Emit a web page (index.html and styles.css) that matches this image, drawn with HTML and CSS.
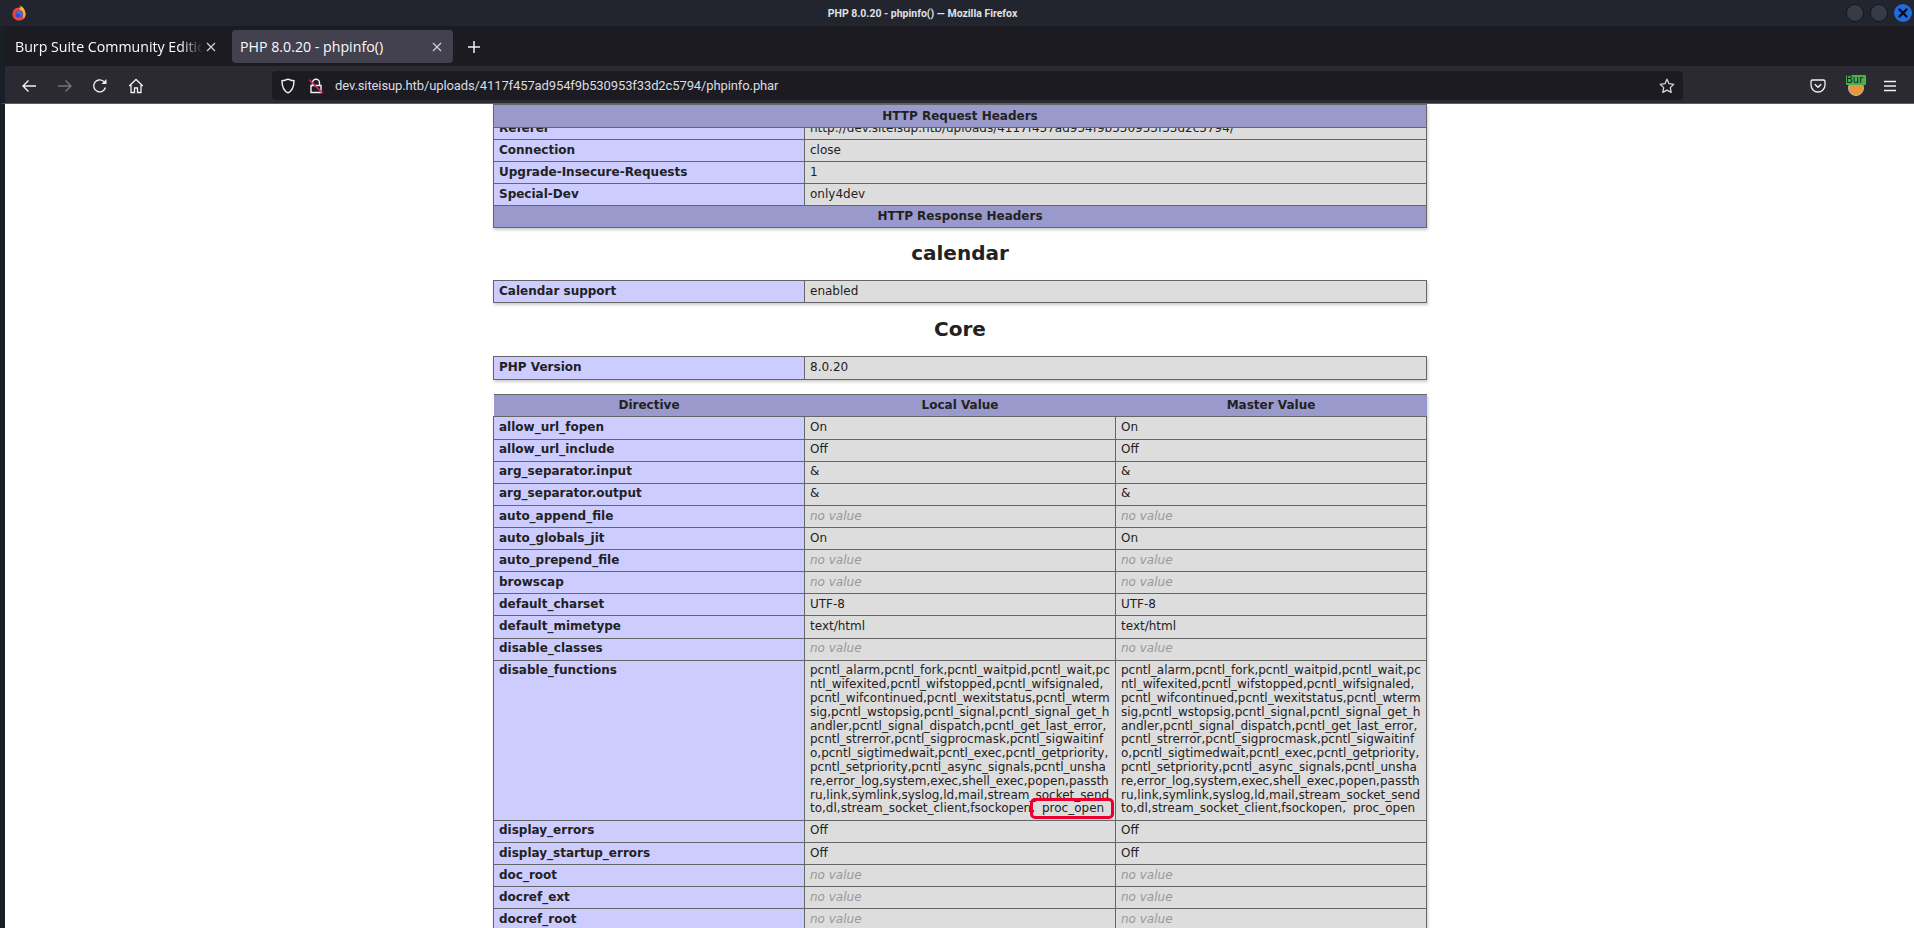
FILE: index.html
```html
<!DOCTYPE html>
<html lang="en">
<head>
<meta charset="utf-8">
<title>PHP 8.0.20 - phpinfo() — Mozilla Firefox</title>
<link rel="stylesheet" href="styles.css">
</head>
<body>
<div class="window">
  <header class="titlebar">
    <svg class="fx-logo" viewBox="0 0 16 16" width="16" height="16">
      <circle cx="8" cy="9" r="6.600" fill="#e8473f"/>
      <path d="M8 2.400c4 .4 6.600 3.200 6.600 6.600 0 2-.9 3.700-2.200 4.900-.2-3.400-2-6.500-4.400-11.500z" fill="#ffa436"/>
      <path d="M8.600 .6c1.200 1.300 1.300 2.400 1 3.400 1.800.6 3.500 2 4.400 3.900.3-3-1.700-6-5.400-7.300z" fill="#ffb52e"/>
      <circle cx="8.200" cy="9.300" r="3.700" fill="#4a3fc4"/>
      <path d="M5 8c1-1.800 3-2 4.500-1.200 1.600.9 2 3.200 1 4.700-1 1.300-3 1.700-4.500.7 1.500.3 3-.2 3.400-1.500.3-1.200-.5-2.200-1.800-2.200-.9 0-1.800.2-2.600-.5z" fill="#2f86ea"/>
    </svg>
    <div class="window-title">PHP 8.0.20 - phpinfo() — Mozilla Firefox</div>
    <div class="window-buttons">
      <span class="wbtn"></span>
      <span class="wbtn"></span>
      <span class="wbtn wbtn-close">
        <svg viewBox="0 0 18 18" width="18" height="18"><path d="M5.500 5.500l7 7M12.500 5.500l-7 7" stroke="#0b0d14" stroke-width="2.400" stroke-linecap="round"/></svg>
      </span>
    </div>
  </header>

  <nav class="tabstrip">
    <div class="tab">
      <span class="tab-label tab-label-fade">Burp Suite Community Edition</span>
      <svg class="tab-close" viewBox="0 0 10 10" width="10" height="10"><path d="M1 1l8 8M9 1l-8 8" stroke="#d4d4d8" stroke-width="1.200"/></svg>
    </div>
    <div class="tab tab-active">
      <span class="tab-label">PHP 8.0.20 - phpinfo()</span>
      <svg class="tab-close" viewBox="0 0 10 10" width="10" height="10"><path d="M1 1l8 8M9 1l-8 8" stroke="#d4d4d8" stroke-width="1.200"/></svg>
    </div>
    <svg class="new-tab" viewBox="0 0 14 14" width="14" height="14"><path d="M7 1v12M1 7h12" stroke="#f0f0f4" stroke-width="1.500"/></svg>
  </nav>

  <div class="toolbar">
    <div class="nav-buttons">
      <svg viewBox="0 0 16 16" width="16" height="16"><path d="M15 8H2M7.500 2.500L2 8l5.500 5.500" fill="none" stroke="#f0f0f4" stroke-width="1.400"/></svg>
      <svg viewBox="0 0 16 16" width="16" height="16"><path d="M1 8h13M8.500 2.500L14 8l-5.500 5.500" fill="none" stroke="#77767e" stroke-width="1.400"/></svg>
      <svg viewBox="0 0 16 16" width="16" height="16"><path d="M13.500 9.500A6 6 0 1 1 11.500 3.200L14 5" fill="none" stroke="#f0f0f4" stroke-width="1.400"/><path d="M14.500 1v5h-5z" fill="#f0f0f4"/></svg>
      <svg viewBox="0 0 16 16" width="16" height="16"><path d="M1.200 8L8 1.500 14.800 8M3 6.500V14.500H6.500V10H9.500V14.500H13V6.500" fill="none" stroke="#f0f0f4" stroke-width="1.300"/></svg>
    </div>
    <div class="urlbar">
      <svg class="shield" viewBox="0 0 16 16" width="16" height="16"><path d="M8 1.200c2 1 4 1.500 6 1.500 0 6-1.500 10-6 12.100C3.500 12.700 2 8.700 2 2.700c2 0 4-.5 6-1.500z" fill="none" stroke="#f0f0f4" stroke-width="1.400"/></svg>
      <svg class="lock" viewBox="0 0 16 16" width="16" height="16"><path d="M4.500 7V4.800a3.500 3.500 0 0 1 7 0V7M3 7.500h10v7H3z" fill="none" stroke="#f0f0f4" stroke-width="1.400"/><path d="M1.200 1.800L14.800 15.200" stroke="#e22850" stroke-width="1.600"/></svg>
      <span class="url">dev.siteisup.htb/uploads/4117f457ad954f9b530953f33d2c5794/phpinfo.phar</span>
      <svg class="star" viewBox="0 0 16 16" width="16" height="16"><path d="M8 1.300l2 4.400 4.800.6-3.500 3.300.9 4.800L8 12.100l-4.200 2.300.9-4.800L1.200 6.300 6 5.700z" fill="none" stroke="#d6d6da" stroke-width="1.300" stroke-linejoin="round"/></svg>
    </div>
    <div class="toolbar-right">
      <svg class="pocket" viewBox="0 0 16 16" width="16" height="16"><path d="M2.500 2h11A1.500 1.500 0 0 1 15 3.500V7a7 7 0 0 1-14 0V3.500A1.500 1.500 0 0 1 2.500 2z" fill="none" stroke="#f0f0f4" stroke-width="1.300"/><path d="M4.800 6.200L8 9.200l3.200-3" fill="none" stroke="#f0f0f4" stroke-width="1.400"/></svg>
      <div class="burp-ext">
        <span class="burp-face"></span>
        <span class="burp-badge">Bur</span>
      </div>
      <svg class="menu" viewBox="0 0 14 12" width="14" height="12"><path d="M1 1.500h12M1 6h12M1 10.500h12" stroke="#f0f0f4" stroke-width="1.400"/></svg>
    </div>
  </div>

  <main class="page">
    <table class="info info-first">
      <colgroup><col class="col-key"><col></colgroup>
      <tr class="h h-pinned"><th colspan="2">HTTP Request Headers</th></tr>
      <tr class="clip-row">
        <td class="e"><div class="clip"><div class="clip-inner">Referer</div></div></td>
        <td class="v"><div class="clip"><div class="clip-inner">http://dev.siteisup.htb/uploads/4117f457ad954f9b530953f33d2c5794/</div></div></td>
      </tr>
      <tr><td class="e">Connection</td><td class="v">close</td></tr>
      <tr><td class="e">Upgrade-Insecure-Requests</td><td class="v">1</td></tr>
      <tr><td class="e">Special-Dev</td><td class="v">only4dev</td></tr>
      <tr class="h"><th colspan="2">HTTP Response Headers</th></tr>
    </table>

    <h2>calendar</h2>
    <table class="info">
      <colgroup><col class="col-key"><col></colgroup>
      <tr><td class="e">Calendar support</td><td class="v">enabled</td></tr>
    </table>

    <h2>Core</h2>
    <table class="info">
      <colgroup><col class="col-key"><col></colgroup>
      <tr><td class="e">PHP Version</td><td class="v">8.0.20</td></tr>
    </table>

    <table class="info directives">
      <colgroup><col class="col-key"><col class="col-val"><col></colgroup>
      <tr class="h"><th>Directive</th><th>Local Value</th><th>Master Value</th></tr>
      <tr><td class="e">allow_url_fopen</td><td class="v">On</td><td class="v">On</td></tr>
      <tr><td class="e">allow_url_include</td><td class="v">Off</td><td class="v">Off</td></tr>
      <tr><td class="e">arg_separator.input</td><td class="v">&amp;</td><td class="v">&amp;</td></tr>
      <tr><td class="e">arg_separator.output</td><td class="v">&amp;</td><td class="v">&amp;</td></tr>
      <tr><td class="e">auto_append_file</td><td class="v"><i>no value</i></td><td class="v"><i>no value</i></td></tr>
      <tr><td class="e">auto_globals_jit</td><td class="v">On</td><td class="v">On</td></tr>
      <tr><td class="e">auto_prepend_file</td><td class="v"><i>no value</i></td><td class="v"><i>no value</i></td></tr>
      <tr><td class="e">browscap</td><td class="v"><i>no value</i></td><td class="v"><i>no value</i></td></tr>
      <tr><td class="e">default_charset</td><td class="v">UTF-8</td><td class="v">UTF-8</td></tr>
      <tr><td class="e">default_mimetype</td><td class="v">text/html</td><td class="v">text/html</td></tr>
      <tr><td class="e">disable_classes</td><td class="v"><i>no value</i></td><td class="v"><i>no value</i></td></tr>
      <tr>
        <td class="e">disable_functions</td>
        <td class="v">pcntl_alarm,pcntl_fork,pcntl_waitpid,pcntl_wait,pc<br>ntl_wifexited,pcntl_wifstopped,pcntl_wifsignaled,<br>pcntl_wifcontinued,pcntl_wexitstatus,pcntl_wterm<br>sig,pcntl_wstopsig,pcntl_signal,pcntl_signal_get_h<br>andler,pcntl_signal_dispatch,pcntl_get_last_error,<br>pcntl_strerror,pcntl_sigprocmask,pcntl_sigwaitinf<br>o,pcntl_sigtimedwait,pcntl_exec,pcntl_getpriority,<br>pcntl_setpriority,pcntl_async_signals,pcntl_unsha<br>re,error_log,system,exec,shell_exec,popen,passth<br>ru,link,symlink,syslog,ld,mail,stream_socket_send<br>to,dl,stream_socket_client,fsockopen,<span class="gap"></span><span class="marked">proc_open</span></td>
        <td class="v">pcntl_alarm,pcntl_fork,pcntl_waitpid,pcntl_wait,pc<br>ntl_wifexited,pcntl_wifstopped,pcntl_wifsignaled,<br>pcntl_wifcontinued,pcntl_wexitstatus,pcntl_wterm<br>sig,pcntl_wstopsig,pcntl_signal,pcntl_signal_get_h<br>andler,pcntl_signal_dispatch,pcntl_get_last_error,<br>pcntl_strerror,pcntl_sigprocmask,pcntl_sigwaitinf<br>o,pcntl_sigtimedwait,pcntl_exec,pcntl_getpriority,<br>pcntl_setpriority,pcntl_async_signals,pcntl_unsha<br>re,error_log,system,exec,shell_exec,popen,passth<br>ru,link,symlink,syslog,ld,mail,stream_socket_send<br>to,dl,stream_socket_client,fsockopen,<span class="gap"></span>proc_open</td>
      </tr>
      <tr><td class="e">display_errors</td><td class="v">Off</td><td class="v">Off</td></tr>
      <tr><td class="e">display_startup_errors</td><td class="v">Off</td><td class="v">Off</td></tr>
      <tr><td class="e">doc_root</td><td class="v"><i>no value</i></td><td class="v"><i>no value</i></td></tr>
      <tr><td class="e">docref_ext</td><td class="v"><i>no value</i></td><td class="v"><i>no value</i></td></tr>
      <tr><td class="e">docref_root</td><td class="v"><i>no value</i></td><td class="v"><i>no value</i></td></tr>
    </table>
  </main>
</div>
</body>
</html>
```
FILE: styles.css
```css
* { box-sizing: border-box; }
html, body { margin: 0; height: 100%; overflow: hidden; background: #fff; }

.window {
  display: flex;
  flex-direction: column;
  height: 928px;
  font-family: "Open Sans", "Noto Sans", sans-serif;
}

/* Title bar */
.titlebar {
  height: 26px;
  flex: none;
  display: grid;
  grid-template-columns: 1fr auto 1fr;
  align-items: center;
  padding: 0 2px 0 11px;
  background: #22252e;
}
.fx-logo { justify-self: start; }
.window-title {
  margin-right: 78px;
  color: #dfe1e6;
  font-family: Roboto, sans-serif;
  font-size: 10.500px;
  font-weight: 700;
}
.window-buttons {
  justify-self: end;
  display: flex;
  gap: 6px;
}
.wbtn {
  width: 18px;
  height: 18px;
  border-radius: 50%;
  background: #373b47;
  border: 1px solid #14161c;
}
.wbtn-close {
  background: #1f6be0;
  border: 0;
}
.wbtn-close svg { display: block; }

/* Tab strip */
.tabstrip {
  height: 40px;
  flex: none;
  display: flex;
  align-items: center;
  padding-top: 1px;
  background: #1c1b22;
  border-left: 5px solid #191e27;
}
.tab {
  width: 221px;
  height: 33px;
  display: flex;
  align-items: center;
  justify-content: space-between;
  padding: 0 11px 0 10px;
  border-radius: 4px;
  color: #fbfbfe;
  font-size: 14.200px;
}
.tab:first-child { width: 227px; padding-right: 16px; }
.tab-active { background: #42414d; padding-left: 8px; }
.tab-label { white-space: nowrap; }
.tab-label-fade {
  width: 188px;
  overflow: hidden;
  -webkit-mask-image: linear-gradient(to right, #000 88%, transparent);
  mask-image: linear-gradient(to right, #000 88%, transparent);
}
.new-tab { margin-left: 14px; }

/* Toolbar */
.toolbar {
  height: 38px;
  flex: none;
  display: flex;
  align-items: center;
  background: #2b2a33;
  border-left: 5px solid #191e27;
  border-bottom: 1px solid #5d5c66;
  padding: 2px 0 0 16px;
}
.nav-buttons {
  display: flex;
  gap: 19.700px;
  width: 251px;
  flex: none;
}
.urlbar {
  width: 1411px;
  height: 29px;
  flex: none;
  display: flex;
  align-items: center;
  padding: 0 8px;
  background: #1c1b22;
  border-radius: 4px;
}
.lock { margin-left: 12px; }
.url {
  margin-left: 11px;
  flex: 1;
  color: #dbdbe0;
  font-family: Roboto, "Open Sans", sans-serif;
  font-size: 13px;
  letter-spacing: -0.110px;
  white-space: nowrap;
}
.toolbar-right {
  display: flex;
  align-items: center;
  margin-left: 127px;
}
.burp-ext {
  position: relative;
  width: 16px;
  height: 22px;
  margin: 0 19px 0 22px;
}
.burp-face {
  position: absolute;
  left: 0;
  top: 5px;
  width: 16px;
  height: 16px;
  border-radius: 50%;
  background: #e8963c;
  border: 1px solid #c9b8a0;
}
.burp-badge {
  position: absolute;
  left: -2px;
  top: 0;
  width: 20px;
  height: 10px;
  overflow: hidden;
  background: #4caf4f;
  border-radius: 1px;
  color: #10221a;
  font-family: "DejaVu Sans", sans-serif;
  font-size: 10px;
  line-height: 10px;
  white-space: nowrap;
}

/* phpinfo page */
.page {
  flex: 1;
  min-height: 0;
  overflow: hidden;
  padding-left: 1px;
  background: #fff;
  border-left: 5px solid #191e27;
  color: #222;
  font-family: "DejaVu Sans", sans-serif;
  font-size: 12px;
}
.info {
  width: 934px;
  margin: 0 auto;
  border-collapse: collapse;
  table-layout: fixed;
  box-shadow: 1px 2px 3px #ccc;
}
.info-first { margin-bottom: -1px; }
.info + .info { margin-top: 14.800px; }
.col-key { width: 311px; }
.col-val { width: 311px; }
.info td, .info th {
  border: 1px solid #666;
  padding: 3.670px 5px;
  line-height: 13.800px;
  vertical-align: baseline;
}
.info .h { background: #99c; text-align: center; font-weight: bold; }
.info .h th { font-weight: bold; }
.info .h-pinned th { padding-top: 4.670px; }
.directives .h th { border-left: 0; border-right: 0; }
.e { background: #ccf; font-weight: bold; }
.v { background: #ddd; }
.v i { color: #999; }

.info .clip-row td { padding: 0 5px; }
.clip { height: 10.800px; overflow: hidden; }
.clip-inner { margin-top: -6px; }

h2 {
  margin: 0;
  height: 53px;
  padding-bottom: 1px;
  display: flex;
  align-items: center;
  justify-content: center;
  font-size: 20px;
  font-weight: bold;
}

.gap { display: inline-block; width: 7px; }
.marked { position: relative; }
.marked::after {
  content: "";
  position: absolute;
  left: -11.500px;
  right: -9.500px;
  top: -3px;
  bottom: -4px;
  border: 3.500px solid #ea0030;
  border-radius: 5px;
}
```
